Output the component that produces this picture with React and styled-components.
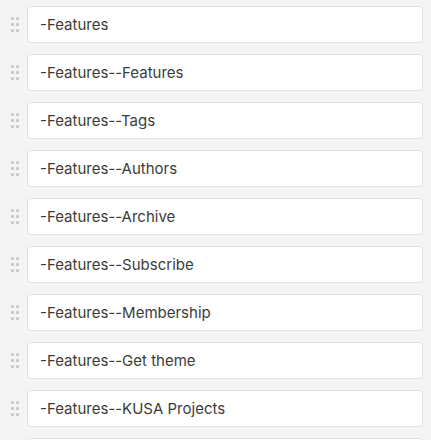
import React from 'react';
import styled, { createGlobalStyle } from 'styled-components';

const GlobalStyle = createGlobalStyle`
    html, body {
        margin: 0;
        padding: 0;
        background: #f4f4f4;
        font-family: Inter, "Noto Sans", sans-serif;
    }
`;

const List = styled.div`
    display: flex;
    flex-direction: column;
    gap: 11px;
    padding: 6px 8px 0 11px;
`;

const Row = styled.div`
    display: flex;
    align-items: center;
    gap: 8px;
`;

const Handle = styled.div`
    display: grid;
    grid-template-columns: repeat(2, 3px);
    grid-auto-rows: 3px;
    gap: 3px 2px;
    width: 8px;
`;

const Dot = styled.span`
    width: 3px;
    height: 3px;
    border-radius: 50%;
    background: #c4c4c4;
`;

const Field = styled.div`
    flex: 1;
    height: 35px;
    display: flex;
    align-items: center;
    padding: 0 12px;
    background: #fff;
    border: 1px solid #e1e1e1;
    border-radius: 4px;
    font-size: 15px;
    color: #3c3c3c;
`;

const items = [
    '-Features',
    '-Features--Features',
    '-Features--Tags',
    '-Features--Authors',
    '-Features--Archive',
    '-Features--Subscribe',
    '-Features--Membership',
    '-Features--Get theme',
    '-Features--KUSA Projects',
    ''
];

function App() {
    return (
        <>
            <GlobalStyle />
            <List>
                {items.map((label, i) => (
                    <Row key={i}>
                        <Handle>
                            {[0, 1, 2, 3, 4, 5].map(d => <Dot key={d} />)}
                        </Handle>
                        <Field>{label}</Field>
                    </Row>
                ))}
            </List>
        </>
    );
}

export default App;
